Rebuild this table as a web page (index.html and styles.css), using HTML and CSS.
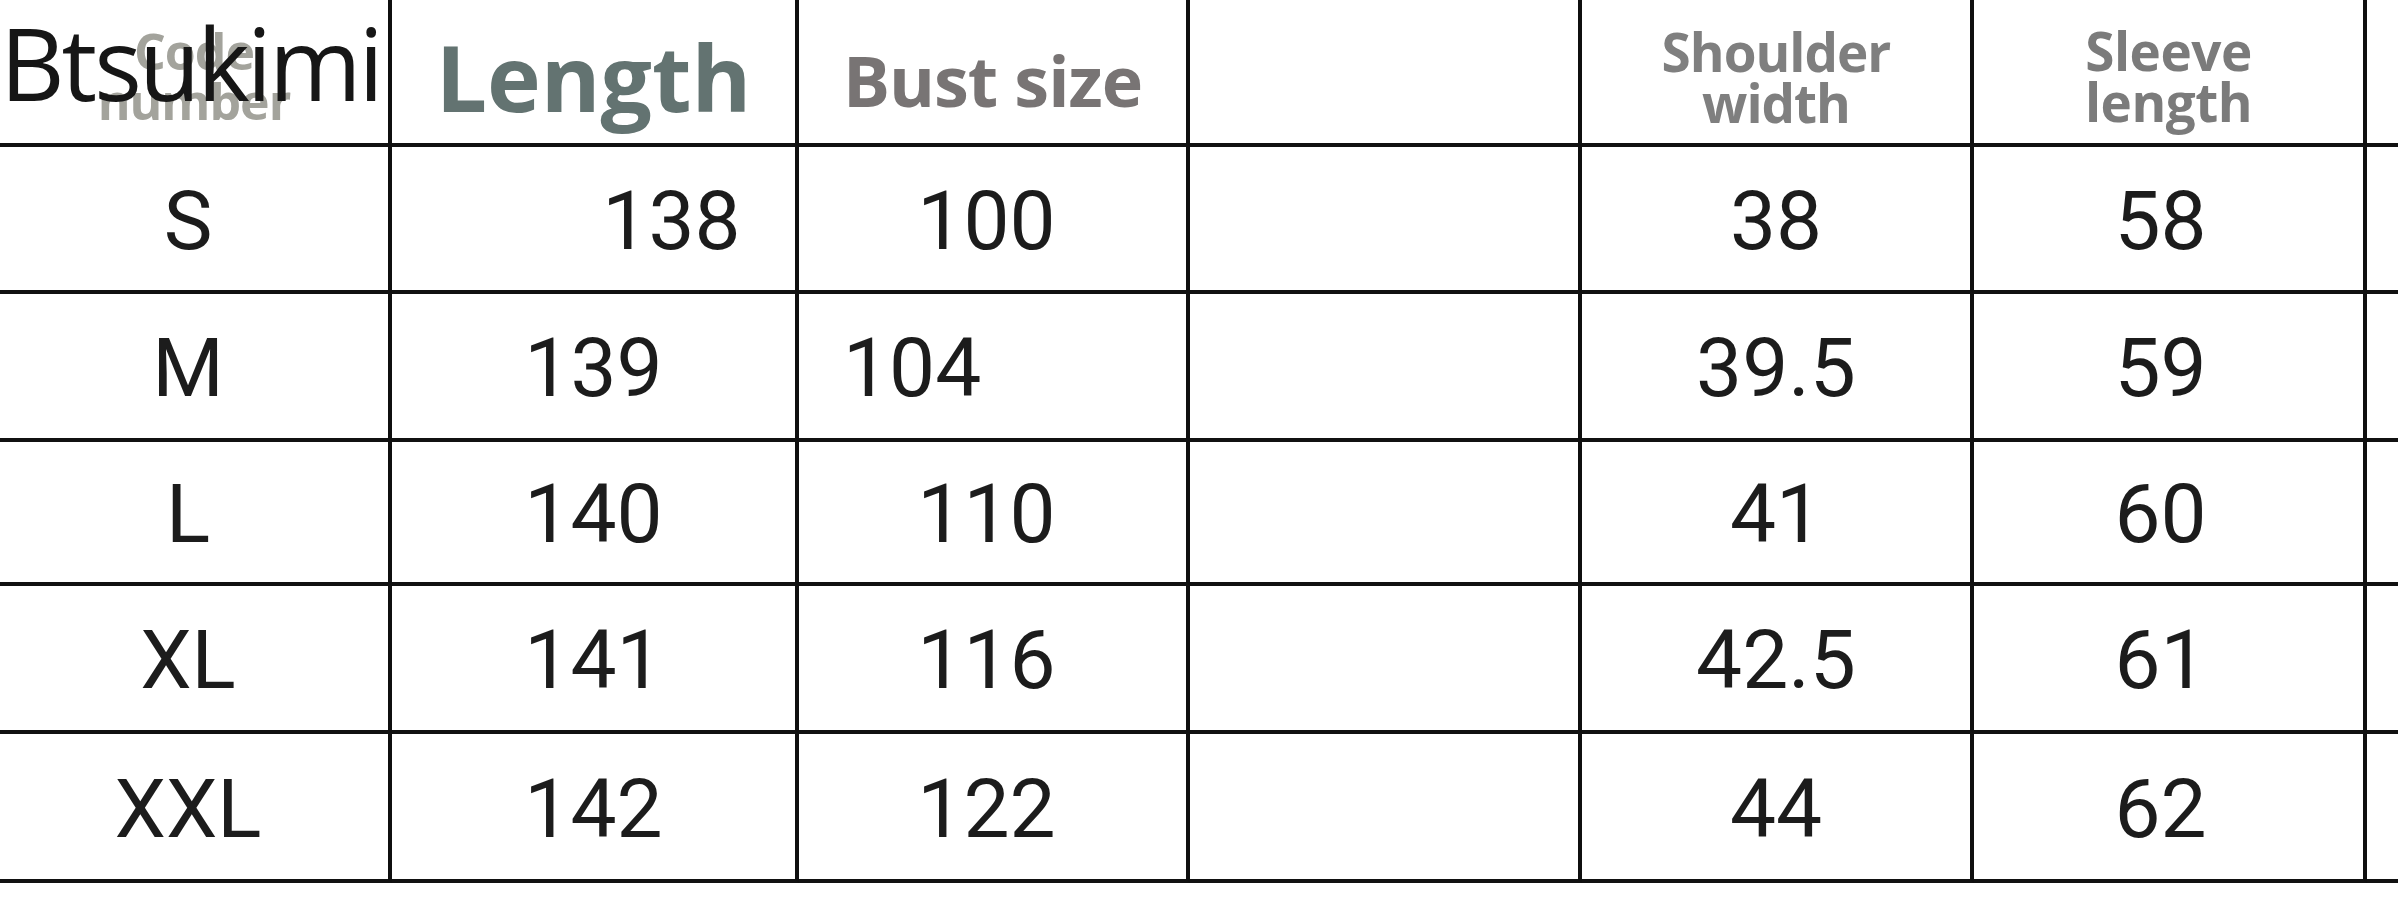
FILE: index.html
```html
<!DOCTYPE html>
<html lang="en">
<head>
<meta charset="utf-8">
<title>Size chart</title>
<link rel="stylesheet" href="styles.css">
</head>
<body>
<div class="page">
  <div class="chart">
    <div class="cell head code"><span>Code<br>number</span></div>
    <div class="cell head length"><span>Length</span></div>
    <div class="cell head bust"><span>Bust size</span></div>
    <div class="cell head blank"></div>
    <div class="cell head shoulder"><span>Shoulder<br>width</span></div>
    <div class="cell head sleeve"><span>Sleeve<br>length</span></div>
    <div class="cell head edge"></div>

    <div class="cell c1">S</div>
    <div class="cell push-right">138</div>
    <div class="cell c3">100</div>
    <div class="cell"></div>
    <div class="cell">38</div>
    <div class="cell c6">58</div>
    <div class="cell edge"></div>

    <div class="cell c1">M</div>
    <div class="cell">139</div>
    <div class="cell flush-left">104</div>
    <div class="cell"></div>
    <div class="cell">39.5</div>
    <div class="cell c6">59</div>
    <div class="cell edge"></div>

    <div class="cell c1">L</div>
    <div class="cell">140</div>
    <div class="cell c3">110</div>
    <div class="cell"></div>
    <div class="cell">41</div>
    <div class="cell c6">60</div>
    <div class="cell edge"></div>

    <div class="cell c1">XL</div>
    <div class="cell">141</div>
    <div class="cell c3">116</div>
    <div class="cell"></div>
    <div class="cell">42.5</div>
    <div class="cell c6">61</div>
    <div class="cell edge"></div>

    <div class="cell c1">XXL</div>
    <div class="cell">142</div>
    <div class="cell c3">122</div>
    <div class="cell"></div>
    <div class="cell">44</div>
    <div class="cell c6">62</div>
    <div class="cell edge"></div>
  </div>
  <div class="brand">Btsukimi</div>
</div>
</body>
</html>
```

FILE: styles.css
```css
html, body {
  margin: 0;
  padding: 0;
  background: #ffffff;
}

.page {
  position: relative;
  width: 2398px;
  height: 900px;
  overflow: hidden;
}

.chart {
  display: grid;
  grid-template-columns: 392px 407px 391px 392px 392px 393px 40px;
  grid-template-rows: 147px 147px 148px 144px 148px 149px;
}

.cell {
  box-sizing: border-box;
  border-right: 4px solid #0f0f0f;
  border-bottom: 4px solid #111111;
  display: flex;
  align-items: center;
  justify-content: center;
  font-family: Roboto, "Liberation Sans", sans-serif;
  font-size: 82px;
  font-weight: 400;
  color: #1c1c1c;
  line-height: 1;
  padding-top: 4px;
}

.cell.edge {
  border-right: none;
}

.c1 {
  padding-right: 12px;
}

.c3 {
  padding-right: 12px;
}

.c6 {
  padding-right: 16px;
}

.push-right {
  padding-left: 156px;
}

.flush-left {
  justify-content: flex-start;
  padding-left: 44px;
}

.head {
  font-family: "Open Sans", "Noto Sans", sans-serif;
  font-weight: 700;
  text-align: center;
  padding-top: 0;
}

.code {
  color: #a3a39c;
  font-size: 50px;
  line-height: 50px;
  letter-spacing: -1px;
  padding-top: 9px;
}

.length {
  color: #637371;
  font-size: 91px;
  letter-spacing: 0;
  padding-top: 12px;
}

.bust {
  color: #787474;
  font-size: 70px;
  letter-spacing: -1px;
  padding-top: 17px;
}

.shoulder,
.sleeve {
  color: #7f7f7f;
  font-size: 53px;
  line-height: 51px;
  letter-spacing: -1px;
  padding-top: 11px;
}

.sleeve {
  color: #7b7b7b;
  letter-spacing: -0.5px;
  padding-top: 8px;
}

.brand {
  position: absolute;
  left: 0;
  top: 12px;
  font-family: "Open Sans", "Noto Sans", sans-serif;
  font-size: 100px;
  font-weight: 400;
  line-height: 1;
  letter-spacing: -3px;
  color: #161616;
}
```
